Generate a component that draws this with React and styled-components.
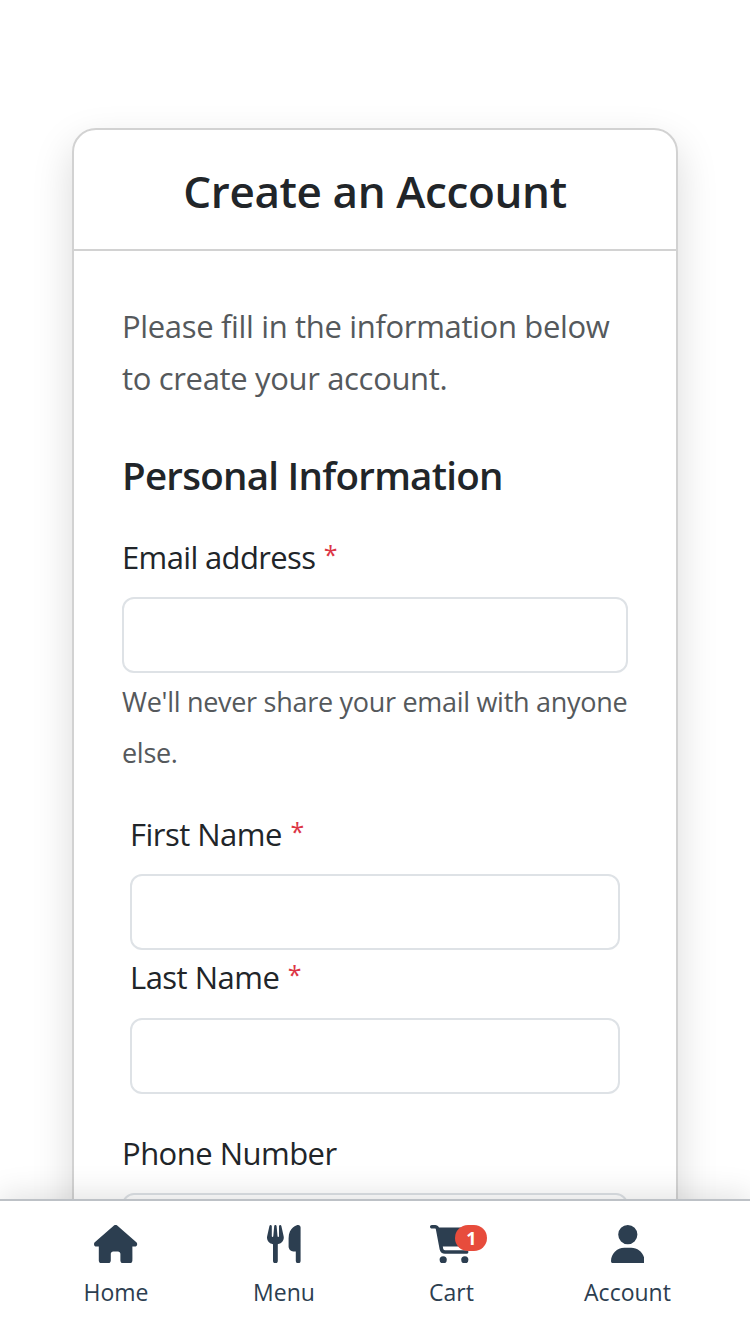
import React from "react";
import styled, { createGlobalStyle } from "styled-components";
import { FaHouse, FaUtensils, FaCartShopping, FaUser } from "react-icons/fa6";

const GlobalStyle = createGlobalStyle`
  *, *::before, *::after { box-sizing: border-box; }
  html, body { margin: 0; height: 100%; overflow: hidden; background: #fff; }
  body { color: #212529; font-family: "Segoe UI", "Open Sans", "Noto Sans", sans-serif; }
`;

const Screen = styled.div`
  height: 1334px;
  display: flex;
  flex-direction: column;
  overflow: hidden;
`;

const Content = styled.main`
  flex: 1;
  min-height: 0;
  padding: 128px 72px 0;
`;

const Card = styled.section`
  height: 1500px;
  border: 2px solid #d2d2d2;
  border-radius: 24px;
  background: #fff;
  box-shadow: 0 16px 40px rgba(0, 0, 0, 0.15);
`;

const CardHeader = styled.header`
  height: 121px;
  padding-top: 31px;
  border-bottom: 2px solid #d2d2d2;
  text-align: center;
`;

const Title = styled.h1`
  margin: 0;
  font-size: 44px;
  line-height: 60px;
  font-weight: 600;
  white-space: nowrap;
  letter-spacing: -0.38px;
`;

const CardBody = styled.div`
  display: flex;
  flex-direction: column;
  padding: 49px 48px;
`;

const Line = styled.span`
  display: block;
  white-space: nowrap;
`;

const Intro = styled.p`
  margin: 0;
  color: #55595c;
  font-size: 31px;
  line-height: 52px;
  letter-spacing: -0.34px;
`;

const SectionTitle = styled.h2`
  margin: 45px 0 0;
  font-size: 38.5px;
  line-height: 52px;
  font-weight: 600;
  white-space: nowrap;
  letter-spacing: -0.74px;
`;

const Field = styled.div`
  display: flex;
  flex-direction: column;
  margin-top: ${(p) => p.$gap}px;
  padding: 0 ${(p) => (p.$inset ? 8 : 0)}px;
`;

const Label = styled.label`
  height: 52px;
  margin-bottom: ${(p) => p.$space}px;
  font-size: 31px;
  line-height: 52px;
  white-space: nowrap;
  letter-spacing: ${(p) => p.$track}px;
`;

const Required = styled.span`
  color: #dc3545;
  margin-left: 1px;
  font-size: 25px;
  line-height: 0;
  vertical-align: 5px;
`;

const Input = styled.input`
  width: 100%;
  height: 76px;
  padding: 12px 24px;
  border: 2px solid #dee2e6;
  border-radius: 12px;
  background: #fff;
  font: inherit;
  outline: none;
`;

const Help = styled.p`
  margin: 3px 0 0;
  color: #55595c;
  font-size: 27px;
  line-height: 51px;
  letter-spacing: -0.29px;
`;

const NavBar = styled.nav`
  position: relative;
  flex: none;
  height: 135px;
  display: grid;
  grid-template-columns: 168px 168px 167px 185px;
  padding: 24px 0 0 32px;
  border-top: 2px solid #bdc1c6;
  background: #fff;
  box-shadow: 0 -4px 30px rgba(0, 0, 0, 0.12);
`;

const NavItem = styled.a`
  display: flex;
  flex-direction: column;
  align-items: center;
  color: #2c3e50;
  font-size: 23px;
  line-height: 38px;
`;

const IconBox = styled.span`
  position: relative;
  display: flex;
  width: ${(p) => p.$width}px;
  height: 38.4px;
  margin-bottom: 10px;

  svg { width: 100%; height: 100%; }
`;

const Badge = styled.span`
  position: absolute;
  top: 0;
  left: 25.5px;
  width: 32px;
  height: 26px;
  border-radius: 13px;
  background: #e74c3c;
  color: #fff;
  font-size: 18px;
  font-weight: 700;
  line-height: 26px;
  text-align: center;
`;

const navItems = [
  { label: "Home", Icon: FaHouse, width: 43.2 },
  { label: "Menu", Icon: FaUtensils, width: 33.6 },
  { label: "Cart", Icon: FaCartShopping, width: 43.2, count: 1 },
  { label: "Account", Icon: FaUser, width: 33.6 },
];

function TextField({
  id, label, required, type = "text", gap, space = 14, track = -0.52, inset, children,
}) {
  return (
    <Field $gap={gap} $inset={inset}>
      <Label htmlFor={id} $space={space} $track={track}>
        {label} {required && <Required>*</Required>}
      </Label>
      <Input id={id} type={type} />
      {children}
    </Field>
  );
}

export default function App() {
  return (
    <>
      <GlobalStyle />
      <Screen>
        <Content>
          <Card>
            <CardHeader>
              <Title>Create an Account</Title>
            </CardHeader>
            <CardBody>
              <Intro>
                <Line>Please fill in the information below</Line>
                <Line>to create your account.</Line>
              </Intro>
              <SectionTitle>Personal Information</SectionTitle>
              <TextField id="email" type="email" label="Email address" required gap={30} track={-0.64}>
                <Help>
                  <Line>We'll never share your email with anyone</Line>
                  <Line>else.</Line>
                </Help>
              </TextField>
              <TextField id="first" label="First Name" required inset gap={30} />
              <TextField id="last" label="Last Name" required inset gap={1} space={15} />
              <TextField id="phone" type="tel" label="Phone Number" gap={33} />
            </CardBody>
          </Card>
        </Content>
        <NavBar>
          {navItems.map(({ label, Icon, width, count }) => (
            <NavItem key={label}>
              <IconBox $width={width}>
                <Icon />
                {count && <Badge>{count}</Badge>}
              </IconBox>
              {label}
            </NavItem>
          ))}
        </NavBar>
      </Screen>
    </>
  );
}
